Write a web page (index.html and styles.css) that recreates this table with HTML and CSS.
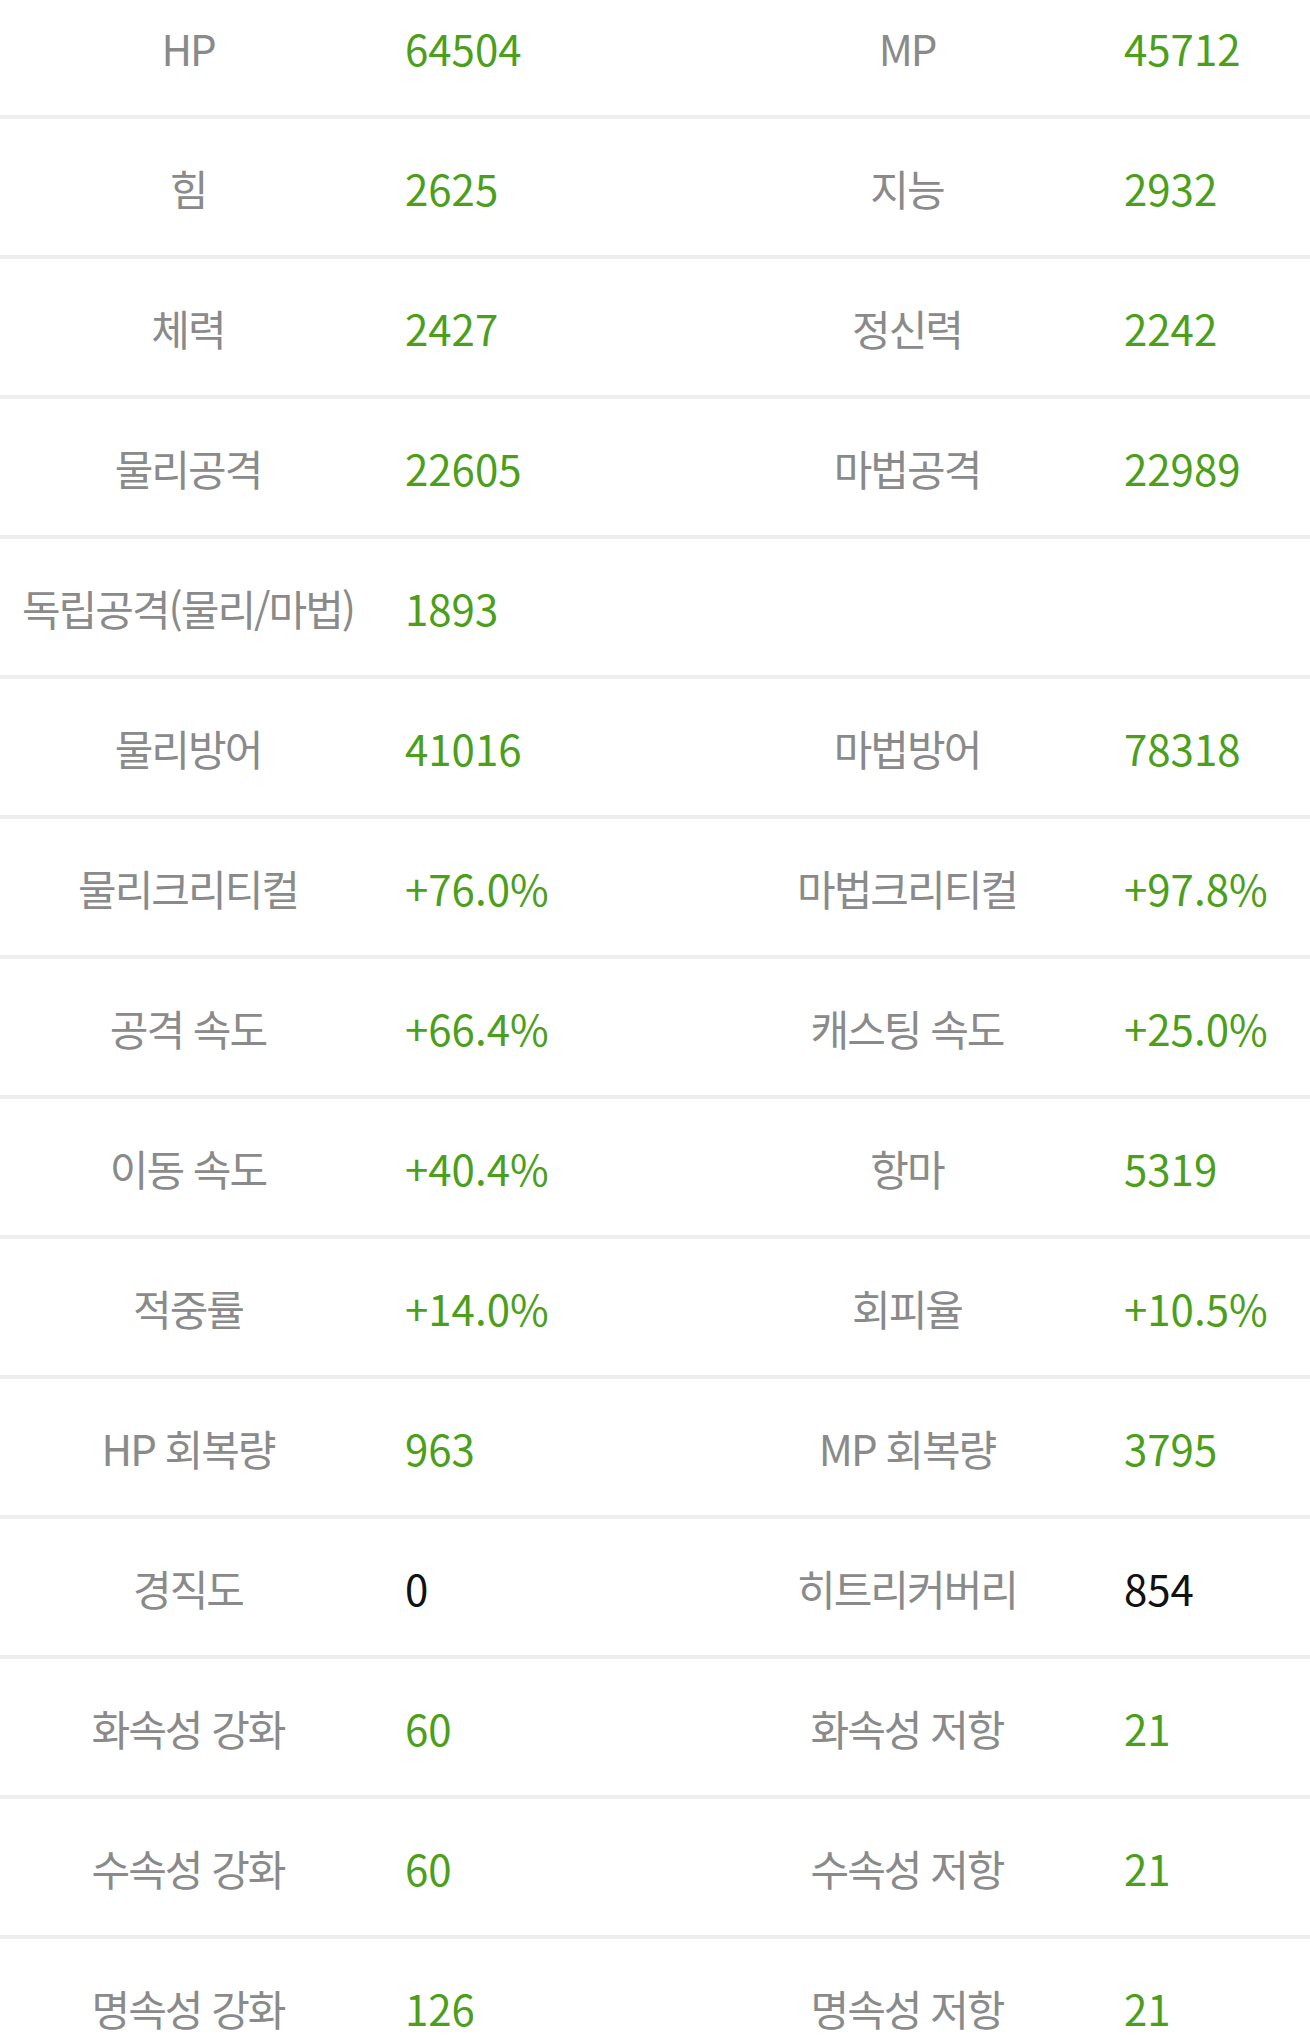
FILE: index.html
```html
<!DOCTYPE html>
<html lang="ko">
<head>
<meta charset="utf-8">
<title>능력치</title>
<link rel="stylesheet" href="styles.css">
</head>
<body>
<div class="stats">
  <div class="row"><div class="label">HP</div><div class="val">64504</div><div class="label">MP</div><div class="val">45712</div></div>
  <div class="row"><div class="label">힘</div><div class="val">2625</div><div class="label">지능</div><div class="val">2932</div></div>
  <div class="row"><div class="label">체력</div><div class="val">2427</div><div class="label">정신력</div><div class="val">2242</div></div>
  <div class="row"><div class="label">물리공격</div><div class="val">22605</div><div class="label">마법공격</div><div class="val">22989</div></div>
  <div class="row"><div class="label">독립공격(물리/마법)</div><div class="val">1893</div><div class="label"></div><div class="val"></div></div>
  <div class="row"><div class="label">물리방어</div><div class="val">41016</div><div class="label">마법방어</div><div class="val">78318</div></div>
  <div class="row"><div class="label">물리크리티컬</div><div class="val">+76.0%</div><div class="label">마법크리티컬</div><div class="val">+97.8%</div></div>
  <div class="row"><div class="label">공격 속도</div><div class="val">+66.4%</div><div class="label">캐스팅 속도</div><div class="val">+25.0%</div></div>
  <div class="row"><div class="label">이동 속도</div><div class="val">+40.4%</div><div class="label">항마</div><div class="val">5319</div></div>
  <div class="row"><div class="label">적중률</div><div class="val">+14.0%</div><div class="label">회피율</div><div class="val">+10.5%</div></div>
  <div class="row"><div class="label">HP 회복량</div><div class="val">963</div><div class="label">MP 회복량</div><div class="val">3795</div></div>
  <div class="row"><div class="label">경직도</div><div class="val plain">0</div><div class="label">히트리커버리</div><div class="val plain">854</div></div>
  <div class="row"><div class="label">화속성 강화</div><div class="val">60</div><div class="label">화속성 저항</div><div class="val">21</div></div>
  <div class="row"><div class="label">수속성 강화</div><div class="val">60</div><div class="label">수속성 저항</div><div class="val">21</div></div>
  <div class="row"><div class="label">명속성 강화</div><div class="val">126</div><div class="label">명속성 저항</div><div class="val">21</div></div>
</div>
</body>
</html>
```

FILE: styles.css
```css
html, body {
  margin: 0;
  padding: 0;
  background: #fff;
}

body {
  font-family: "Noto Sans CJK KR", "Noto Sans", sans-serif;
  font-size: 42px;
  overflow: hidden;
}

.stats {
  margin-top: -21px;
}

.row {
  display: grid;
  grid-template-columns: 374px 345px 374px 1fr;
  align-items: center;
  height: 136px;
  border-bottom: 4px solid #eeeeee;
}

.label {
  text-align: center;
  color: #8a8a8a;
  white-space: nowrap;
  letter-spacing: -2px;
  text-indent: 2px;
}

.val {
  padding-left: 31px;
  color: #4c9f1a;
  white-space: nowrap;
}

.val.plain {
  color: #111;
}
```
